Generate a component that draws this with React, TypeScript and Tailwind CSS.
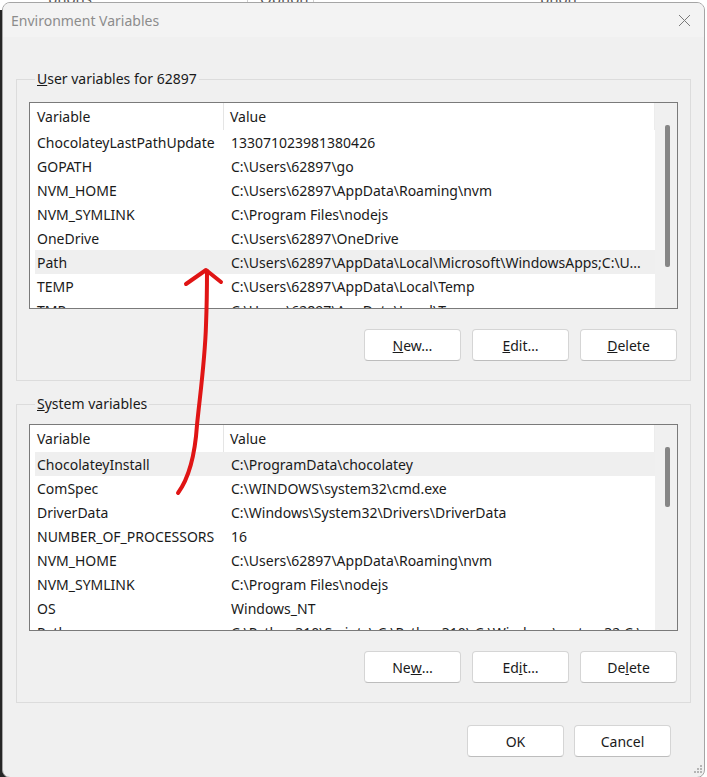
import React from "react";

type Row = { name: string; value: string; selected?: boolean };

const userRows: Row[] = [
  { name: "ChocolateyLastPathUpdate", value: "133071023981380426" },
  { name: "GOPATH", value: "C:\\Users\\62897\\go" },
  { name: "NVM_HOME", value: "C:\\Users\\62897\\AppData\\Roaming\\nvm" },
  { name: "NVM_SYMLINK", value: "C:\\Program Files\\nodejs" },
  { name: "OneDrive", value: "C:\\Users\\62897\\OneDrive" },
  { name: "Path", value: "C:\\Users\\62897\\AppData\\Local\\Microsoft\\WindowsApps;C:\\U...", selected: true },
  { name: "TEMP", value: "C:\\Users\\62897\\AppData\\Local\\Temp" },
  { name: "TMP", value: "C:\\Users\\62897\\AppData\\Local\\Temp" },
];

const systemRows: Row[] = [
  { name: "ChocolateyInstall", value: "C:\\ProgramData\\chocolatey", selected: true },
  { name: "ComSpec", value: "C:\\WINDOWS\\system32\\cmd.exe" },
  { name: "DriverData", value: "C:\\Windows\\System32\\Drivers\\DriverData" },
  { name: "NUMBER_OF_PROCESSORS", value: "16" },
  { name: "NVM_HOME", value: "C:\\Users\\62897\\AppData\\Roaming\\nvm" },
  { name: "NVM_SYMLINK", value: "C:\\Program Files\\nodejs" },
  { name: "OS", value: "Windows_NT" },
  { name: "Path", value: "C:\\Python310\\Scripts\\;C:\\Python310\\;C:\\Windows\\system32;C:\\..." },
];

function ListView({ rows, thumbH }: { rows: Row[]; thumbH: string }) {
  return (
    <div className="h-[207px] border border-[#7a7a7a] bg-white flex overflow-hidden">
      <div className="flex-1 min-w-0 flex flex-col overflow-hidden">
        <div className="h-[27px] shrink-0 flex items-center">
          <div className="w-[194px] h-full flex items-center pl-[7px] border-r border-[#e5e5e5]">Variable</div>
          <div className="flex-1 h-full flex items-center pl-[6px] border-r border-[#ececec]">Value</div>
        </div>
        {rows.map((r, i) => (
          <div
            key={i}
            className={
              "h-[24px] shrink-0 ml-[5px] flex items-center whitespace-nowrap " +
              (r.selected ? "bg-[#efefef]" : "")
            }
          >
            <div className="w-[193px] shrink-0 pl-[2px]">{r.name}</div>
            <div className="flex-1 min-w-0 overflow-hidden pl-[3px]">{r.value}</div>
          </div>
        ))}
      </div>
      <div className="w-[22px] shrink-0 bg-[#f0f0f0] pt-[22px] flex justify-center">
        <div className={"w-[5px] ml-[3px] rounded-[2px] bg-[#868686] " + thumbH} />
      </div>
    </div>
  );
}

function Btn({ children }: { children: React.ReactNode }) {
  return (
    <div className="w-[97px] h-[32px] rounded-[4px] bg-white border border-[#d5d5d5] border-b-[#bdbdbd] flex items-center justify-center">
      {children}
    </div>
  );
}

function Group({
  label,
  rows,
  thumbH,
  buttons,
  listMt,
}: {
  label: React.ReactNode;
  rows: Row[];
  thumbH: string;
  buttons: React.ReactNode[];
  listMt: string;
}) {
  return (
    <fieldset className="min-w-0 border border-[#dcdcdc] mx-[13px] px-[12px] pb-[19px]">
      <legend className="ml-[6px] px-[2px] leading-[20px]">{label}</legend>
      <div className={listMt}>
        <ListView rows={rows} thumbH={thumbH} />
      </div>
      <div className="mt-[20px] flex justify-end gap-[11px] pr-[1px]">
        {buttons.map((b, i) => (
          <Btn key={i}>{b}</Btn>
        ))}
      </div>
    </fieldset>
  );
}

export default function App() {
  return (
    <div
      className="relative w-[707px] h-[777px] overflow-hidden bg-white text-[14px] text-[#1a1a1a]"
      style={{ fontFamily: "'Segoe UI', 'Noto Sans', sans-serif" }}
    >
      {/* background window fragments */}
      <div className="absolute top-[-13px] left-[48px] text-[#555] text-[15px]">ptions</div>
      <div className="absolute top-[-13px] left-[260px] text-[#555] text-[15px]">Option</div>
      <div className="absolute top-[-13px] left-[540px] text-[#555] text-[15px]">ption</div>
      <div className="absolute top-0 left-[247px] w-px h-[3px] bg-[#cfcfcf]" />
      <div className="absolute top-0 left-[313px] w-px h-[3px] bg-[#cfcfcf]" />
      <div className="absolute left-0 top-[10px] w-[12px] h-[767px] bg-[#262626]" />

      {/* dialog window */}
      <div className="absolute left-[2px] top-[2px] w-[703px] h-[776px] rounded-[8px] border border-[#a5a5a5] bg-[#f0f0f0] flex flex-col overflow-hidden">
        <div className="h-[34px] shrink-0 bg-[#f3f3f3] flex items-center justify-between pl-[8px] pr-[13px]">
          <span className="text-[#8c8c8c] text-[14px]">Environment Variables</span>
          <svg width="13" height="13" viewBox="0 0 13 13">
            <path d="M1 1 L12 12 M12 1 L1 12" stroke="#7a7a7a" strokeWidth="1" />
          </svg>
        </div>

        <div className="mt-[32px]">
          <Group
            label={
              <>
                <u>U</u>ser variables for 62897
              </>
            }
            rows={userRows}
            thumbH="h-[142px]"
            listMt="mt-[13px]"
            buttons={[
              <>
                <u>N</u>ew…
              </>,
              <>
                <u>E</u>dit…
              </>,
              <>
                <u>D</u>elete
              </>,
            ]}
          />
        </div>

        <div className="mt-[13px]">
          <Group
            label={
              <>
                <u>S</u>ystem variables
              </>
            }
            rows={systemRows}
            thumbH="h-[60px]"
            listMt="mt-[10px]"
            buttons={[
              <>
                Ne<u>w</u>…
              </>,
              <>
                Ed<u>i</u>t…
              </>,
              <>
                De<u>l</u>ete
              </>,
            ]}
          />
        </div>

        <div className="mt-[22px] flex justify-end gap-[10px] pr-[33px]">
          <Btn>OK</Btn>
          <Btn>Cancel</Btn>
        </div>
      </div>

      {/* resize grip */}
      <svg className="absolute left-[690px] top-[762px]" width="14" height="14" viewBox="0 0 14 14">
        <rect x="10" y="3" width="2" height="2" fill="#b5b5b5" />
        <rect x="7" y="6" width="2" height="2" fill="#b5b5b5" />
        <rect x="10" y="6" width="2" height="2" fill="#b5b5b5" />
        <rect x="4" y="9" width="2" height="2" fill="#b5b5b5" />
        <rect x="7" y="9" width="2" height="2" fill="#b5b5b5" />
        <rect x="10" y="9" width="2" height="2" fill="#b5b5b5" />
      </svg>

      {/* red annotation arrow */}
      <svg className="absolute left-0 top-0 pointer-events-none" width="707" height="777" viewBox="0 0 707 777">
        <path
          d="M178 493 C 189 478, 195 455, 197 425 C 200 395, 205 360, 206 325 C 207 300, 207 285, 207 271"
          fill="none"
          stroke="#e01515"
          strokeWidth="4"
          strokeLinecap="round"
        />
        <path
          d="M186 284 L 206 270 L 221 282"
          fill="none"
          stroke="#e01515"
          strokeWidth="4"
          strokeLinecap="round"
          strokeLinejoin="round"
        />
      </svg>
    </div>
  );
}
